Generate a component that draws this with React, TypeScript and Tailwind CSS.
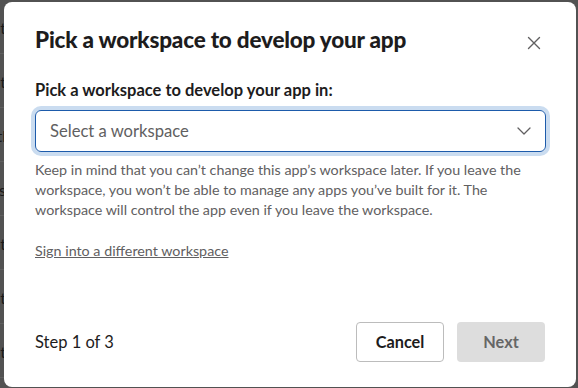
import React from "react";

const rows = ["t", "t", "tl", "s", "t", "t", "t"];

export default function App() {
  return (
    <div className="relative w-[578px] h-[388px] bg-[#525252] overflow-hidden" style={{ fontFamily: "Lato, 'Noto Sans', sans-serif" }}>
      <div className="flex flex-col">
        {rows.map((r, i) => (
          <div key={i} className="h-[54px] border-b border-[#5f5f5f] flex items-center justify-end w-[6px] overflow-hidden text-[16px] text-[#1a1a1a] pt-[2px]">
            <span className="whitespace-nowrap">tes{r}</span>
          </div>
        ))}
      </div>
      <div className="absolute left-[4px] top-[2px] w-[572px] h-[385px] bg-white rounded-[8px] flex flex-col">
        <div className="flex items-start justify-between pl-[31px] pr-[30px] pt-[23px]">
          <h1 className="text-[22.5px] font-black text-[#1d1c1d] leading-[30px] tracking-[-0.2px]">Pick a workspace to develop your app</h1>
          <button className="mt-[6px] w-[24px] h-[24px] flex items-center justify-center text-[#616061]">
            <svg width="14" height="14" viewBox="0 0 14 14" fill="none" stroke="currentColor" strokeWidth="1.4" strokeLinecap="round">
              <path d="M1.5 1.5L12.5 12.5M12.5 1.5L1.5 12.5" />
            </svg>
          </button>
        </div>
        <div className="pl-[31px] pr-[30px] pt-[24px] flex flex-col">
          <label className="text-[16.5px] font-bold text-[#1d1c1d] leading-[22px]">Pick a workspace to develop your app in:</label>
          <div className="mt-[9px] h-[42px] rounded-[6px] border border-[#1d5bab] shadow-[0_0_0_4px_#cadcf0] flex items-center justify-between pl-[14px] pr-[14px]">
            <span className="text-[16.6px] text-[#616061]">Select a workspace</span>
            <svg width="14" height="8" viewBox="0 0 14 8" fill="none" stroke="#616061" strokeWidth="1.3" strokeLinecap="round" strokeLinejoin="round">
              <path d="M1 1L7 7L13 1" />
            </svg>
          </div>
          <p className="mt-[8px] text-[14.3px] leading-[20px] text-[#616061]">
            Keep in mind that you can’t change this app’s workspace later. If you leave the workspace, you won’t be able to manage any apps you’ve built for it. The workspace will control the app even if you leave the workspace.
          </p>
          <a className="mt-[21px] text-[14.3px] leading-[20px] text-[#616061] underline self-start">Sign into a different workspace</a>
        </div>
        <div className="mt-auto flex items-center justify-between pl-[31px] pr-[31px] pb-[25px]">
          <span className="text-[16.5px] text-[#1d1c1d]">Step 1 of 3</span>
          <div className="flex gap-[13px]">
            <button className="w-[88px] h-[40px] rounded-[4px] border border-[#bcbcbc] bg-white text-[16.3px] font-bold text-[#1d1c1d]">Cancel</button>
            <button className="w-[88px] h-[40px] rounded-[4px] bg-[#dddddd] text-[16.3px] font-bold text-[#666666]">Next</button>
          </div>
        </div>
      </div>
    </div>
  );
}
